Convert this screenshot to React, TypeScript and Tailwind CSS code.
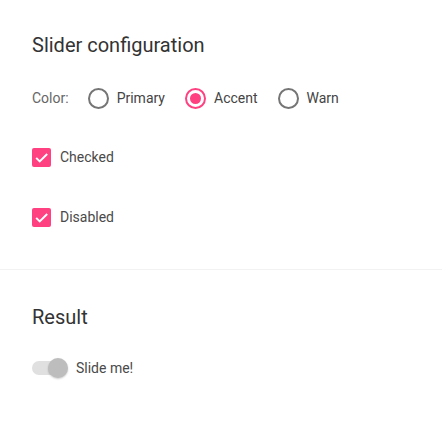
import { useState } from "react";

type RadioProps = { label: string; checked: boolean; onSelect: () => void; first?: boolean };

function Radio({ label, checked, onSelect, first }: RadioProps) {
  return (
    <label onClick={onSelect} className={`flex cursor-pointer items-center ${first ? "ml-[19px]" : "ml-[20px]"}`}>
      <span
        className={`flex h-[21px] w-[21px] items-center justify-center rounded-full border-2 ${
          checked ? "border-[#ff4081]" : "border-[#757575]"
        }`}
      >
        {checked && <span className="h-[11px] w-[11px] rounded-full bg-[#ff4081]" />}
      </span>
      <span className="ml-2 text-[14px] text-[#444444]">{label}</span>
    </label>
  );
}

function Checkbox({ label }: { label: string }) {
  return (
    <div className="flex h-10 items-center">
      <span className="flex h-[19px] w-[19px] items-center justify-center rounded-[2px] bg-[#ff4081]">
        <svg viewBox="0 0 24 24" className="h-[17px] w-[17px]" fill="none" stroke="white" strokeWidth="2.8">
          <path d="M4.5 12.5l5 5L20 7" />
        </svg>
      </span>
      <span className="ml-[9px] text-[14px] text-[#4a4a4a]">{label}</span>
    </div>
  );
}

export default function App() {
  const [color, setColor] = useState("accent");

  return (
    <div className="min-h-[421px] w-full bg-white font-['Roboto',sans-serif]">
      <div className="border-b border-[#f2f2f2] pb-[32px] pl-[32px] pt-[31px]">
        <h2 className="text-[20px] leading-[28px] text-[#333333]">Slider configuration</h2>

        <div className="mt-[19px] flex h-10 items-center">
          <span className="text-[14px] text-[#666666]">Color:</span>
          <Radio first label="Primary" checked={color === "primary"} onSelect={() => setColor("primary")} />
          <Radio label="Accent" checked={color === "accent"} onSelect={() => setColor("accent")} />
          <Radio label="Warn" checked={color === "warn"} onSelect={() => setColor("warn")} />
        </div>

        <div className="mt-[19px]">
          <Checkbox label="Checked" />
        </div>
        <div className="mt-[20px]">
          <Checkbox label="Disabled" />
        </div>
      </div>

      <div className="pl-[32px] pt-[33px]">
        <h2 className="text-[20px] leading-[28px] text-[#333333]">Result</h2>
        <div className="mt-[17px] flex h-10 items-center">
          <div className="relative h-5 w-9">
            <span className="absolute left-0 top-[3px] h-[14px] w-[34px] rounded-full bg-[#e0e0e0]" />
            <span className="absolute left-[16px] top-0 h-5 w-5 rounded-full bg-[#bdbdbd] shadow-[0_1px_2px_rgba(0,0,0,0.2)]" />
          </div>
          <span className="ml-2 text-[14px] text-[#4a4a4a]">Slide me!</span>
        </div>
      </div>
    </div>
  );
}
